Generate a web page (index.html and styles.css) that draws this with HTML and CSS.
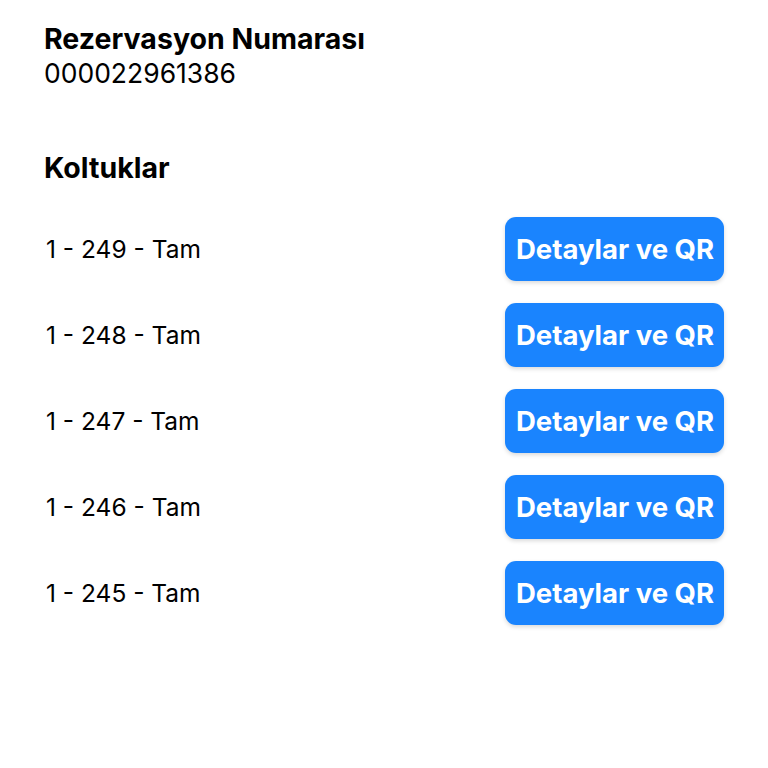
FILE: index.html
```html
<!DOCTYPE html>
<html lang="tr">
<head>
  <meta charset="UTF-8">
  <title>Rezervasyon</title>
  <link rel="stylesheet" href="styles.css">
</head>
<body>

  <div class="page">
    <div class="reservation">
      <div class="label">Rezervasyon Numarası</div>
      <div class="number">000022961386</div>
    </div>

    <h3 class="seats-title">Koltuklar</h3>

    <ul class="seats">
      <li class="seat">
        <span class="seat-name">1 - 249 - Tam</span>
        <button class="btn">Detaylar ve QR</button>
      </li>
      <li class="seat">
        <span class="seat-name">1 - 248 - Tam</span>
        <button class="btn">Detaylar ve QR</button>
      </li>
      <li class="seat">
        <span class="seat-name">1 - 247 - Tam</span>
        <button class="btn">Detaylar ve QR</button>
      </li>
      <li class="seat">
        <span class="seat-name">1 - 246 - Tam</span>
        <button class="btn">Detaylar ve QR</button>
      </li>
      <li class="seat">
        <span class="seat-name">1 - 245 - Tam</span>
        <button class="btn">Detaylar ve QR</button>
      </li>
    </ul>
  </div>

</body>
</html>
```

FILE: styles.css
```css
body {
  margin: 0;
  background: #fff;
  color: #000;
  font-family: Inter, "Noto Sans", sans-serif;
}
.page {
  padding: 22px 44px 0 44px;
}
.label {
  font-size: 28.5px;
  font-weight: 700;
  line-height: 34px;
}
.number {
  font-size: 26.5px;
  line-height: 34px;
}
.seats-title {
  font-size: 28.5px;
  font-weight: 700;
  margin: 61px 0 0 0;
  line-height: 34px;
}
.seats {
  list-style: none;
  padding: 0;
  margin: 32px 0 0 0;
}
.seat {
  display: flex;
  align-items: center;
  justify-content: space-between;
  margin-bottom: 22px;
}
.seat-name {
  font-size: 24.5px;
  padding-left: 2px;
}
.btn {
  font-family: inherit;
  font-size: 27.5px;
  font-weight: 700;
  color: #fff;
  background: #1a84fe;
  border: none;
  border-radius: 11px;
  height: 64px;
  padding: 0 10px 0 11px;
  box-shadow: 0 2px 4px rgba(0, 0, 0, 0.15);
}
```
